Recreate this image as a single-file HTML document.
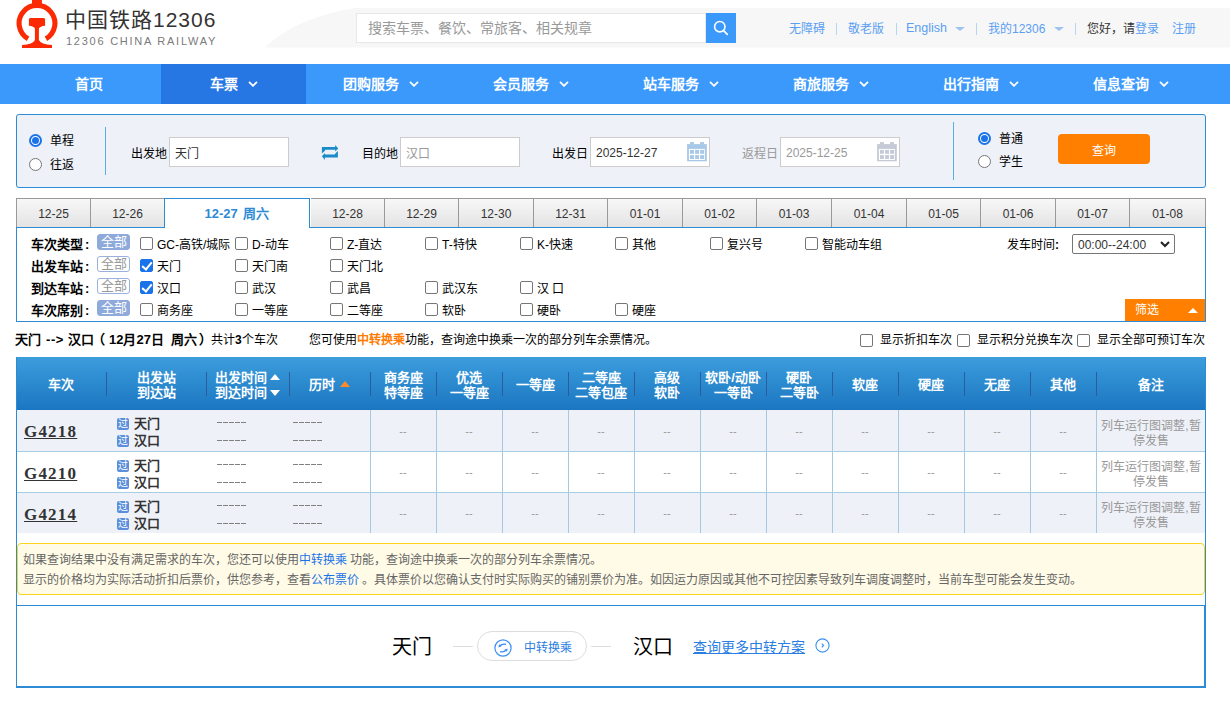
<!DOCTYPE html>
<html lang="zh-CN"><head><meta charset="utf-8">
<style>
*{margin:0;padding:0;box-sizing:border-box}
html,body{width:1230px;height:713px;overflow:hidden;background:#fff}
body{position:relative;font-family:"Liberation Sans",sans-serif;font-size:13px;color:#333}
.a{position:absolute;white-space:nowrap}
/* header */
#swoosh{position:absolute;left:0;top:0}
.tl{color:#5a9ff2;font-size:12px;line-height:14px;top:22px}
.sep{position:absolute;top:23px;width:1px;height:12px;background:#b8d4f5}
.dd{position:absolute;top:27px;width:0;height:0;border-left:5px solid transparent;border-right:5px solid transparent;border-top:4px solid #9cc3f2}
/* nav */
#nav{position:absolute;left:0;top:64px;width:1230px;height:40px;background:#3b99fc}
.ni{position:absolute;top:0;height:40px;color:#fff;font-size:14px;line-height:40px;text-align:center;font-weight:bold}
.chev{display:inline-block;margin-left:10px;position:relative;top:-2px}
/* search panel */
#panel{position:absolute;left:16px;top:114px;width:1190px;height:74px;background:#eef1f8;border:1px solid #2d8ad4;border-radius:3px}
.radio{position:absolute;width:13px;height:13px;border-radius:50%;border:1px solid #767676;background:#fff}
.radio.on{border:2px solid #1a73e8;background:#fff}
.radio.on::after{content:"";position:absolute;left:1px;top:1px;width:7px;height:7px;border-radius:50%;background:#1a73e8}
.lbl{font-size:12px;line-height:15px;color:#000}
.inp{position:absolute;height:30px;width:120px;border:1px solid #ccc;background:#fff}
.cal{position:absolute}
/* date tabs */
.tab{position:absolute;top:198px;height:30px;border:1px solid #999;border-left:none;background:linear-gradient(#f7f7f7,#e3e3e3);font-size:12px;line-height:30px;text-align:center;color:#333}
/* filter */
#filter{position:absolute;left:16px;top:227px;width:1190px;height:95px;border:1px solid #2d8ad4;border-top:1px solid #2d8ad4;background:#fff}
.fl{position:absolute;font-weight:bold;font-size:13px;line-height:14px;color:#000}
.all{position:absolute;width:33px;height:16px;border-radius:3px;font-size:13px;line-height:14px;text-align:center}
.all.on{background:#8eaadb;color:#fff;border:1px solid #8eaadb}
.all.off{background:#fff;color:#999;border:1px solid #9ab0de}
.cb{position:absolute;width:13px;height:13px;border:1px solid #767676;border-radius:2px;background:#fff}
.cb.on{background:#1a73e8;border-color:#1a73e8}
.cb.on::after{content:"";position:absolute;left:3px;top:0px;width:4px;height:8px;border-right:2px solid #fff;border-bottom:2px solid #fff;transform:rotate(40deg)}
.sm{top:333px;font-size:12px;line-height:14px;color:#000}.b{font-weight:bold;font-size:13px}
.ft{position:absolute;font-size:12px;line-height:14px;color:#000}
/* table */
#thead{position:absolute;left:16px;top:357px;width:1190px;height:53px;background:linear-gradient(#3c9ddc,#1b76c1)}
.th{position:absolute;color:#fff;font-weight:bold;font-size:13px;line-height:15px;text-align:center}
.vd{position:absolute;top:15px;width:1px;height:24px;background:#2b5d9c}
.row{position:absolute;left:16px;width:1190px;height:41px;border-bottom:1px solid #a9cde6}
.cell{position:absolute;top:0;height:41px;border-left:1px solid #a9cde6}
.dash{position:absolute;width:30px;height:1px;background:repeating-linear-gradient(90deg,#808080 0 5px,transparent 5px 6px)}

.tab.act{top:198px;height:30px;border:1px solid #2d8ad4;border-bottom:none;background:#fff;color:#2d8ad4;font-weight:bold;font-size:13px;z-index:2;height:30px;line-height:29px;word-spacing:2px}
.tu,.td,.to{display:inline-block;width:0;height:0;border-left:5px solid transparent;border-right:5px solid transparent;margin-left:3px;vertical-align:middle}
.tu{border-bottom:6px solid #fff;position:relative;top:-2px}
.td{border-top:6px solid #fff;position:relative;top:-1px}
.to{border-bottom:6px solid #ff8a2a;position:relative;top:-2px;margin-left:5px}
.tn{font-family:"Liberation Serif",serif;font-weight:bold;font-size:17px;line-height:20px;color:#333;text-decoration:underline;letter-spacing:1.2px}
.st{font-weight:bold;font-size:13px;line-height:14px;color:#333}
.guo{display:inline-block;width:12px;height:12px;background:#5b8fdb;border-radius:2px;color:#fff;font-size:10px;line-height:12px;text-align:center;font-style:normal;font-weight:normal;margin-right:5px;vertical-align:top;margin-top:1px}
.dd2{text-align:center;color:#999;font-size:11px;line-height:12px}
.rem{text-align:center;color:#999;font-size:12px;line-height:15px}
.tf{top:636px;font-size:20px;line-height:22px;color:#000}
.note{font-size:12px;line-height:14px;color:#666}
</style></head><body>

<!-- HEADER -->
<svg id="swoosh" width="1230" height="50" viewBox="0 0 1230 50"><path d="M265,47.5 Q295,18 355,8 L1230,8 L1230,47.5 Z" fill="#f7f7f7"/></svg>
<svg class="a" style="left:16px;top:0" width="42" height="48" viewBox="0 0 42 48">
 <path d="M12.05,38.80 A17.9,17.9 0 1 1 29.95,38.80" fill="none" stroke="#fc2a04" stroke-width="5.1"/>
 <rect x="16" y="0" width="9.9" height="6" fill="#fc2a04"/>
 <path d="M14,17.9 L28,17.9 L29.1,19 L29.1,25.7 Q24,26 22.9,28.6 L22.9,40 Q25,44.5 36,45.1 L36,47.9 L6,47.9 L6,45.1 Q17,44.5 18.9,40 L18.9,28.6 Q18,26 12.9,25.7 L12.9,19 Z" fill="#fc2a04"/>
</svg>
<div class="a" style="left:65px;top:7px;font-size:21px;line-height:25px;color:#333;letter-spacing:1px">中国铁路12306</div>
<div class="a" style="left:66px;top:34.5px;font-size:11px;line-height:13px;color:#7a7a7a;letter-spacing:1.75px">12306 CHINA RAILWAY</div>

<div class="a" style="left:356px;top:13px;width:350px;height:30px;background:#fff;border:1px solid #e8e8e8"></div>
<div class="a" style="left:368px;top:20px;font-size:14px;line-height:16px;color:#999">搜索车票、餐饮、常旅客、相关规章</div>
<div class="a" style="left:706px;top:13px;width:30px;height:30px;background:#3b99fc"></div>
<svg class="a" style="left:713px;top:20px" width="16" height="16" viewBox="0 0 16 16"><circle cx="6.8" cy="6.7" r="5.2" fill="none" stroke="#fff" stroke-width="1.6"/><path d="M10.6,10.6 L14.3,14.3" stroke="#fff" stroke-width="1.7" stroke-linecap="round"/></svg>

<div class="a tl" style="left:789px">无障碍</div>
<div class="sep" style="left:836px"></div>
<div class="a tl" style="left:848px">敬老版</div>
<div class="sep" style="left:896px"></div>
<div class="a tl" style="left:906px;font-size:12.5px;top:21px">English</div>
<div class="dd" style="left:955px"></div>
<div class="sep" style="left:976px"></div>
<div class="a tl" style="left:988px">我的12306</div>
<div class="dd" style="left:1054px"></div>
<div class="sep" style="left:1075px"></div>
<div class="a tl" style="left:1087px;color:#333">您好，请<span style="color:#5a9ff2">登录</span></div>
<div class="a tl" style="left:1172px">注册</div>

<!-- NAV -->
<div id="nav">
 <div class="ni" style="left:16px;width:145px">首页</div>
 <div class="ni" style="left:161px;width:145px;background:#2676e3">车票<svg class="chev" width="10" height="6" viewBox="0 0 10 6"><path d="M1,0.8 L5,4.8 L9,0.8" fill="none" stroke="#fff" stroke-width="1.8"/></svg></div>
 <div class="ni" style="left:306px;width:150px">团购服务<svg class="chev" width="10" height="6" viewBox="0 0 10 6"><path d="M1,0.8 L5,4.8 L9,0.8" fill="none" stroke="#fff" stroke-width="1.8"/></svg></div>
 <div class="ni" style="left:456px;width:150px">会员服务<svg class="chev" width="10" height="6" viewBox="0 0 10 6"><path d="M1,0.8 L5,4.8 L9,0.8" fill="none" stroke="#fff" stroke-width="1.8"/></svg></div>
 <div class="ni" style="left:606px;width:150px">站车服务<svg class="chev" width="10" height="6" viewBox="0 0 10 6"><path d="M1,0.8 L5,4.8 L9,0.8" fill="none" stroke="#fff" stroke-width="1.8"/></svg></div>
 <div class="ni" style="left:756px;width:150px">商旅服务<svg class="chev" width="10" height="6" viewBox="0 0 10 6"><path d="M1,0.8 L5,4.8 L9,0.8" fill="none" stroke="#fff" stroke-width="1.8"/></svg></div>
 <div class="ni" style="left:906px;width:150px">出行指南<svg class="chev" width="10" height="6" viewBox="0 0 10 6"><path d="M1,0.8 L5,4.8 L9,0.8" fill="none" stroke="#fff" stroke-width="1.8"/></svg></div>
 <div class="ni" style="left:1056px;width:150px">信息查询<svg class="chev" width="10" height="6" viewBox="0 0 10 6"><path d="M1,0.8 L5,4.8 L9,0.8" fill="none" stroke="#fff" stroke-width="1.8"/></svg></div>
</div>

<!-- SEARCH PANEL -->
<div id="panel"></div>
<div class="radio on" style="left:29px;top:134px"></div>
<div class="a lbl" style="left:50px;top:134px">单程</div>
<div class="radio" style="left:29px;top:158px"></div>
<div class="a lbl" style="left:50px;top:158px">往返</div>
<div class="a" style="left:105px;top:127px;width:1px;height:48px;background:#5aaee0"></div>

<div class="a lbl" style="left:131px;top:147px">出发地</div>
<div class="inp" style="left:169px;top:137px"></div>
<div class="a lbl" style="left:175px;top:147px;color:#333">天门</div>
<svg class="a" style="left:321px;top:144px" width="18" height="17" viewBox="0 0 18 17"><path d="M0.9,9.5 L0.9,2.9 L14.2,2.9 L14.2,1 L17.2,4.4 L14.2,7.6 L14.2,5.8 L4.1,5.8 L4.1,6.4 Z M16.9,7.1 L16.9,13.5 L3.9,13.5 L3.9,15.9 L0.9,12.2 L3.9,9.1 L3.9,10.5 L13.9,10.5 L13.9,10.1 Z" fill="#1a8ac8"/></svg>
<div class="a lbl" style="left:362px;top:147px">目的地</div>
<div class="inp" style="left:400px;top:137px"></div>
<div class="a lbl" style="left:406px;top:147px;color:#999">汉口</div>

<div class="a lbl" style="left:552px;top:147px">出发日</div>
<div class="inp" style="left:590px;top:137px"></div>
<div class="a" style="left:596px;top:146px;font-size:12px;line-height:14px;color:#333">2025-12-27</div>
<svg class="a" style="left:684px;top:139px" width="26" height="26" viewBox="0 0 26 26"><g fill="#a8c8e8"><rect x="3.1" y="5.1" width="19.7" height="17.2"/><rect x="6" y="3.1" width="3.9" height="2.2"/><rect x="16.1" y="3.1" width="3.9" height="2.2"/></g><rect x="4.9" y="9.9" width="15.9" height="11.1" fill="#fff"/><g fill="#a8c8e8"><rect x="6" y="10.9" width="3.9" height="3.9"/><rect x="11.1" y="10.9" width="3.9" height="3.9"/><rect x="16.1" y="10.9" width="3.9" height="3.9"/><rect x="6" y="16.1" width="3.9" height="3.9"/><rect x="11.1" y="16.1" width="3.9" height="3.9"/><rect x="16.1" y="16.1" width="3.9" height="3.9"/></g></svg>

<div class="a lbl" style="left:742px;top:147px;color:#999">返程日</div>
<div class="inp" style="left:780px;top:137px"></div>
<div class="a" style="left:786px;top:146px;font-size:12px;line-height:14px;color:#999">2025-12-25</div>
<svg class="a" style="left:874px;top:139px" width="26" height="26" viewBox="0 0 26 26"><g fill="#c5cad6"><rect x="3.1" y="5.1" width="19.7" height="17.2"/><rect x="6" y="3.1" width="3.9" height="2.2"/><rect x="16.1" y="3.1" width="3.9" height="2.2"/></g><rect x="4.9" y="9.9" width="15.9" height="11.1" fill="#fff"/><g fill="#c5cad6"><rect x="6" y="10.9" width="3.9" height="3.9"/><rect x="11.1" y="10.9" width="3.9" height="3.9"/><rect x="16.1" y="10.9" width="3.9" height="3.9"/><rect x="6" y="16.1" width="3.9" height="3.9"/><rect x="11.1" y="16.1" width="3.9" height="3.9"/><rect x="16.1" y="16.1" width="3.9" height="3.9"/></g></svg>

<div class="a" style="left:953px;top:122px;width:1px;height:58px;background:#5aaee0"></div>
<div class="radio on" style="left:978px;top:132px"></div>
<div class="a lbl" style="left:999px;top:132px">普通</div>
<div class="radio" style="left:978px;top:155px"></div>
<div class="a lbl" style="left:999px;top:155px">学生</div>
<div class="a" style="left:1058px;top:134px;width:92px;height:30px;background:#ff8000;border-radius:4px;color:#fff;font-size:12px;line-height:35px;text-align:center">查询</div>

<!-- DATE TABS -->
<div class="tab" style="left:16px;width:75px;border-left:1px solid #999">12-25</div>
<div class="tab" style="left:91px;width:74px">12-26</div>
<div class="tab" style="left:311px;width:74px">12-28</div>
<div class="tab" style="left:385px;width:74px">12-29</div>
<div class="tab" style="left:459px;width:75px">12-30</div>
<div class="tab" style="left:534px;width:74px">12-31</div>
<div class="tab" style="left:608px;width:75px">01-01</div>
<div class="tab" style="left:683px;width:74px">01-02</div>
<div class="tab" style="left:757px;width:75px">01-03</div>
<div class="tab" style="left:832px;width:75px">01-04</div>
<div class="tab" style="left:907px;width:74px">01-05</div>
<div class="tab" style="left:981px;width:75px">01-06</div>
<div class="tab" style="left:1056px;width:74px">01-07</div>
<div class="tab" style="left:1130px;width:76px">01-08</div>
<div class="tab act" style="left:164px;width:146px">12-27 周六</div>
<!-- FILTER -->
<div id="filter"></div>
<div class="fl" style="left:31px;top:238px">车次类型<span style="margin-left:2px">:</span></div>
<div class="all on" style="left:97px;top:234px">全部</div>
<div class="cb" style="left:140px;top:237px"></div><div class="ft" style="left:157px;top:238px">GC-高铁/城际</div>
<div class="cb" style="left:235px;top:237px"></div><div class="ft" style="left:252px;top:238px">D-动车</div>
<div class="cb" style="left:330px;top:237px"></div><div class="ft" style="left:347px;top:238px">Z-直达</div>
<div class="cb" style="left:425px;top:237px"></div><div class="ft" style="left:442px;top:238px">T-特快</div>
<div class="cb" style="left:520px;top:237px"></div><div class="ft" style="left:537px;top:238px">K-快速</div>
<div class="cb" style="left:615px;top:237px"></div><div class="ft" style="left:632px;top:238px">其他</div>
<div class="cb" style="left:710px;top:237px"></div><div class="ft" style="left:727px;top:238px">复兴号</div>
<div class="cb" style="left:805px;top:237px"></div><div class="ft" style="left:822px;top:238px">智能动车组</div>
<div class="fl" style="left:31px;top:260px">出发车站<span style="margin-left:2px">:</span></div>
<div class="all off" style="left:97px;top:256px">全部</div>
<div class="cb on" style="left:140px;top:259px"></div><div class="ft" style="left:157px;top:260px">天门</div>
<div class="cb" style="left:235px;top:259px"></div><div class="ft" style="left:252px;top:260px">天门南</div>
<div class="cb" style="left:330px;top:259px"></div><div class="ft" style="left:347px;top:260px">天门北</div>
<div class="fl" style="left:31px;top:282px">到达车站<span style="margin-left:2px">:</span></div>
<div class="all off" style="left:97px;top:278px">全部</div>
<div class="cb on" style="left:140px;top:281px"></div><div class="ft" style="left:157px;top:282px">汉口</div>
<div class="cb" style="left:235px;top:281px"></div><div class="ft" style="left:252px;top:282px">武汉</div>
<div class="cb" style="left:330px;top:281px"></div><div class="ft" style="left:347px;top:282px">武昌</div>
<div class="cb" style="left:425px;top:281px"></div><div class="ft" style="left:442px;top:282px">武汉东</div>
<div class="cb" style="left:520px;top:281px"></div><div class="ft" style="left:537px;top:282px">汉 口</div>
<div class="fl" style="left:31px;top:304px">车次席别<span style="margin-left:2px">:</span></div>
<div class="all on" style="left:97px;top:300px">全部</div>
<div class="cb" style="left:140px;top:303px"></div><div class="ft" style="left:157px;top:304px">商务座</div>
<div class="cb" style="left:235px;top:303px"></div><div class="ft" style="left:252px;top:304px">一等座</div>
<div class="cb" style="left:330px;top:303px"></div><div class="ft" style="left:347px;top:304px">二等座</div>
<div class="cb" style="left:425px;top:303px"></div><div class="ft" style="left:442px;top:304px">软卧</div>
<div class="cb" style="left:520px;top:303px"></div><div class="ft" style="left:537px;top:304px">硬卧</div>
<div class="cb" style="left:615px;top:303px"></div><div class="ft" style="left:632px;top:304px">硬座</div>
<div class="ft" style="left:1007px;top:238px">发车时间<b>:</b></div>
<div class="a" style="left:1072px;top:234px;width:103px;height:20px;border:1px solid #767676;border-radius:2px;background:#fff;font-size:12px;line-height:20px;padding-left:5px;color:#333">00:00--24:00</div>
<svg class="a" style="left:1160px;top:240px" width="10" height="8" viewBox="0 0 10 8"><path d="M1,2 L5,6 L9,2" fill="none" stroke="#222" stroke-width="2"/></svg>
<div class="a" style="left:1125px;top:299px;width:80px;height:22px;background:#ff8000;color:#fff;font-size:12px;line-height:23px;padding-left:10px">筛选</div>
<div class="a" style="left:1188px;top:308px;width:0;height:0;border-left:5px solid transparent;border-right:5px solid transparent;border-bottom:5px solid #fff"></div>
<!-- SUMMARY -->
<div class="a sm b" style="left:15px">天门</div><div class="a sm b" style="left:46px;letter-spacing:0.6px">--&gt;</div><div class="a sm b" style="left:68px">汉口</div><div class="a sm b" style="left:92px">（</div><div class="a sm b" style="left:109px">12月27日</div><div class="a sm b" style="left:171px">周六</div><div class="a sm b" style="left:199px">）</div><div class="a sm" style="left:211px">共计<b>3</b>个车次</div>
<div class="a" style="left:309px;top:333px;font-size:12px;line-height:14px;color:#000">您可使用<b style="color:#ff7b00">中转换乘</b>功能，查询途中换乘一次的部分列车余票情况。</div>
<div class="cb" style="left:860px;top:334px"></div>
<div class="cb" style="left:957px;top:334px"></div>
<div class="cb" style="left:1077px;top:334px"></div>
<div class="ft" style="left:880px;top:333px">显示折扣车次</div>
<div class="ft" style="left:977px;top:333px">显示积分兑换车次</div>
<div class="ft" style="left:1097px;top:333px">显示全部可预订车次</div>
<!-- TABLE -->
<div id="thead">
<div class="th" style="left:0px;width:90px;top:20px">车次</div>
<div class="th" style="left:90px;width:100px;top:13px">出发站<br>到达站</div>
<div class="th" style="left:190px;width:83px;top:13px">出发时间<span class=tu></span><br>到达时间<span class=td></span></div>
<div class="th" style="left:273px;width:81px;top:20px">历时<span class=to></span></div>
<div class="th" style="left:354px;width:66px;top:13px">商务座<br>特等座</div>
<div class="th" style="left:420px;width:66px;top:13px">优选<br>一等座</div>
<div class="th" style="left:486px;width:66px;top:20px">一等座</div>
<div class="th" style="left:552px;width:66px;top:13px">二等座<br>二等包座</div>
<div class="th" style="left:618px;width:66px;top:13px">高级<br>软卧</div>
<div class="th" style="left:684px;width:66px;top:13px">软卧/动卧<br>一等卧</div>
<div class="th" style="left:750px;width:66px;top:13px">硬卧<br>二等卧</div>
<div class="th" style="left:816px;width:66px;top:20px">软座</div>
<div class="th" style="left:882px;width:66px;top:20px">硬座</div>
<div class="th" style="left:948px;width:66px;top:20px">无座</div>
<div class="th" style="left:1014px;width:66px;top:20px">其他</div>
<div class="th" style="left:1080px;width:110px;top:20px">备注</div>
<div class="vd" style="left:90px"></div>
<div class="vd" style="left:190px"></div>
<div class="vd" style="left:273px"></div>
<div class="vd" style="left:354px"></div>
<div class="vd" style="left:420px"></div>
<div class="vd" style="left:486px"></div>
<div class="vd" style="left:552px"></div>
<div class="vd" style="left:618px"></div>
<div class="vd" style="left:684px"></div>
<div class="vd" style="left:750px"></div>
<div class="vd" style="left:816px"></div>
<div class="vd" style="left:882px"></div>
<div class="vd" style="left:948px"></div>
<div class="vd" style="left:1014px"></div>
<div class="vd" style="left:1080px"></div>
</div>
<div class="a" style="left:17px;top:410px;width:1188px;height:41px;background:#eef1f8"></div>
<div class="a tn" style="left:24px;top:422.0px">G4218</div>
<div class="a st" style="left:117px;top:417.0px"><i class="guo">过</i>天门</div>
<div class="a st" style="left:117px;top:434.0px"><i class="guo">过</i>汉口</div>
<div class="a dash" style="left:217px;top:422.0px"></div><div class="a dash" style="left:217px;top:440.0px"></div>
<div class="a dash" style="left:293px;top:422.0px"></div><div class="a dash" style="left:293px;top:440.0px"></div>
<div class="a dd2" style="left:370px;width:66px;top:424.5px">--</div>
<div class="a dd2" style="left:436px;width:66px;top:424.5px">--</div>
<div class="a dd2" style="left:502px;width:66px;top:424.5px">--</div>
<div class="a dd2" style="left:568px;width:66px;top:424.5px">--</div>
<div class="a dd2" style="left:634px;width:66px;top:424.5px">--</div>
<div class="a dd2" style="left:700px;width:66px;top:424.5px">--</div>
<div class="a dd2" style="left:766px;width:66px;top:424.5px">--</div>
<div class="a dd2" style="left:832px;width:66px;top:424.5px">--</div>
<div class="a dd2" style="left:898px;width:66px;top:424.5px">--</div>
<div class="a dd2" style="left:964px;width:66px;top:424.5px">--</div>
<div class="a dd2" style="left:1030px;width:66px;top:424.5px">--</div>
<div class="a rem" style="left:1096px;width:110px;top:418.5px">列车运行图调整,暂<br>停发售</div>
<div class="a" style="left:17px;top:452px;width:1188px;height:40px;background:#fff"></div>
<div class="a tn" style="left:24px;top:463.5px">G4210</div>
<div class="a st" style="left:117px;top:458.5px"><i class="guo">过</i>天门</div>
<div class="a st" style="left:117px;top:475.5px"><i class="guo">过</i>汉口</div>
<div class="a dash" style="left:217px;top:463.5px"></div><div class="a dash" style="left:217px;top:481.5px"></div>
<div class="a dash" style="left:293px;top:463.5px"></div><div class="a dash" style="left:293px;top:481.5px"></div>
<div class="a dd2" style="left:370px;width:66px;top:466.0px">--</div>
<div class="a dd2" style="left:436px;width:66px;top:466.0px">--</div>
<div class="a dd2" style="left:502px;width:66px;top:466.0px">--</div>
<div class="a dd2" style="left:568px;width:66px;top:466.0px">--</div>
<div class="a dd2" style="left:634px;width:66px;top:466.0px">--</div>
<div class="a dd2" style="left:700px;width:66px;top:466.0px">--</div>
<div class="a dd2" style="left:766px;width:66px;top:466.0px">--</div>
<div class="a dd2" style="left:832px;width:66px;top:466.0px">--</div>
<div class="a dd2" style="left:898px;width:66px;top:466.0px">--</div>
<div class="a dd2" style="left:964px;width:66px;top:466.0px">--</div>
<div class="a dd2" style="left:1030px;width:66px;top:466.0px">--</div>
<div class="a rem" style="left:1096px;width:110px;top:460.0px">列车运行图调整,暂<br>停发售</div>
<div class="a" style="left:17px;top:493px;width:1188px;height:40px;background:#eef1f8"></div>
<div class="a tn" style="left:24px;top:504.5px">G4214</div>
<div class="a st" style="left:117px;top:499.5px"><i class="guo">过</i>天门</div>
<div class="a st" style="left:117px;top:516.5px"><i class="guo">过</i>汉口</div>
<div class="a dash" style="left:217px;top:504.5px"></div><div class="a dash" style="left:217px;top:522.5px"></div>
<div class="a dash" style="left:293px;top:504.5px"></div><div class="a dash" style="left:293px;top:522.5px"></div>
<div class="a dd2" style="left:370px;width:66px;top:507.0px">--</div>
<div class="a dd2" style="left:436px;width:66px;top:507.0px">--</div>
<div class="a dd2" style="left:502px;width:66px;top:507.0px">--</div>
<div class="a dd2" style="left:568px;width:66px;top:507.0px">--</div>
<div class="a dd2" style="left:634px;width:66px;top:507.0px">--</div>
<div class="a dd2" style="left:700px;width:66px;top:507.0px">--</div>
<div class="a dd2" style="left:766px;width:66px;top:507.0px">--</div>
<div class="a dd2" style="left:832px;width:66px;top:507.0px">--</div>
<div class="a dd2" style="left:898px;width:66px;top:507.0px">--</div>
<div class="a dd2" style="left:964px;width:66px;top:507.0px">--</div>
<div class="a dd2" style="left:1030px;width:66px;top:507.0px">--</div>
<div class="a rem" style="left:1096px;width:110px;top:501.0px">列车运行图调整,暂<br>停发售</div>
<div class="a" style="left:17px;top:451px;width:1188px;height:1px;background:#a9cde6"></div>
<div class="a" style="left:17px;top:492px;width:1188px;height:1px;background:#a9cde6"></div>
<div class="a" style="left:370px;top:410px;width:1px;height:123px;background:#a7c9e0"></div>
<div class="a" style="left:436px;top:410px;width:1px;height:123px;background:#a7c9e0"></div>
<div class="a" style="left:502px;top:410px;width:1px;height:123px;background:#a7c9e0"></div>
<div class="a" style="left:568px;top:410px;width:1px;height:123px;background:#a7c9e0"></div>
<div class="a" style="left:634px;top:410px;width:1px;height:123px;background:#a7c9e0"></div>
<div class="a" style="left:700px;top:410px;width:1px;height:123px;background:#a7c9e0"></div>
<div class="a" style="left:766px;top:410px;width:1px;height:123px;background:#a7c9e0"></div>
<div class="a" style="left:832px;top:410px;width:1px;height:123px;background:#a7c9e0"></div>
<div class="a" style="left:898px;top:410px;width:1px;height:123px;background:#a7c9e0"></div>
<div class="a" style="left:964px;top:410px;width:1px;height:123px;background:#a7c9e0"></div>
<div class="a" style="left:1030px;top:410px;width:1px;height:123px;background:#a7c9e0"></div>
<div class="a" style="left:1096px;top:410px;width:1px;height:123px;background:#a7c9e0"></div>
<div class="a" style="left:16px;top:357px;width:1px;height:248px;background:#2d8ad4"></div>
<div class="a" style="left:1205px;top:357px;width:1px;height:248px;background:#2d8ad4"></div>
<div class="a" style="left:17px;top:543px;width:1188px;height:52px;background:#fffbe6;border:1px solid #f9d31c;border-radius:4px"></div>
<div class="a note" style="left:23px;top:553px">如果查询结果中没有满足需求的车次，您还可以使用<span style="color:#1a73e8">中转换乘</span> 功能，查询途中换乘一次的部分列车余票情况。</div>
<div class="a note" style="left:23px;top:573px">显示的价格均为实际活动折扣后票价，供您参考，查看<span style="color:#1a73e8">公布票价</span> 。具体票价以您确认支付时实际购买的铺别票价为准。如因运力原因或其他不可控因素导致列车调度调整时，当前车型可能会发生变动。</div>
<div class="a" style="left:16px;top:605px;width:1190px;height:83px;border:1px solid #2d8ad4;border-right:2px solid #2d8ad4;border-bottom:2px solid #2d8ad4;background:#fff"></div>
<div class="a tf" style="left:392px">天门</div>
<div class="a" style="left:453px;top:646px;width:20px;height:1px;background:#ddd"></div>
<div class="a" style="left:477px;top:631px;width:110px;height:30px;border:1px solid #ddd;border-radius:15px"></div>
<svg class="a" style="left:494.3px;top:638.5px" width="18" height="18" viewBox="0 0 18 18"><circle cx="9" cy="9" r="8.1" fill="none" stroke="#3b8ff5" stroke-width="1.2"/><g fill="none" stroke="#3b8ff5" stroke-width="1.4"><path d="M6,7 Q7.6,4.6 12,5.3"/><path d="M6.2,12.7 Q10.5,13.4 12,10.9"/></g><g fill="#3b8ff5"><path d="M4.4,8.4 L5,5.3 L7.6,7.2 Z"/><path d="M13.6,9.6 L13,12.7 L10.4,10.8 Z"/></g></svg>
<div class="a" style="left:524px;top:641px;font-size:12px;line-height:14px;color:#2a7de1">中转换乘</div>
<div class="a" style="left:591px;top:646px;width:20px;height:1px;background:#ddd"></div>
<div class="a tf" style="left:633px">汉口</div>
<div class="a" style="left:693px;top:639px;font-size:14px;line-height:16px;color:#2a7de1;text-decoration:underline">查询更多中转方案</div>
<svg class="a" style="left:815.3px;top:638.4px" width="15" height="15" viewBox="0 0 15 15"><circle cx="7.5" cy="7.5" r="6.6" fill="none" stroke="#3b8ff5" stroke-width="1.1"/><path d="M6.8,5.6 L8.6,7.5 L6.8,9.4" fill="none" stroke="#3b8ff5" stroke-width="1.1"/></svg>
</body></html>
